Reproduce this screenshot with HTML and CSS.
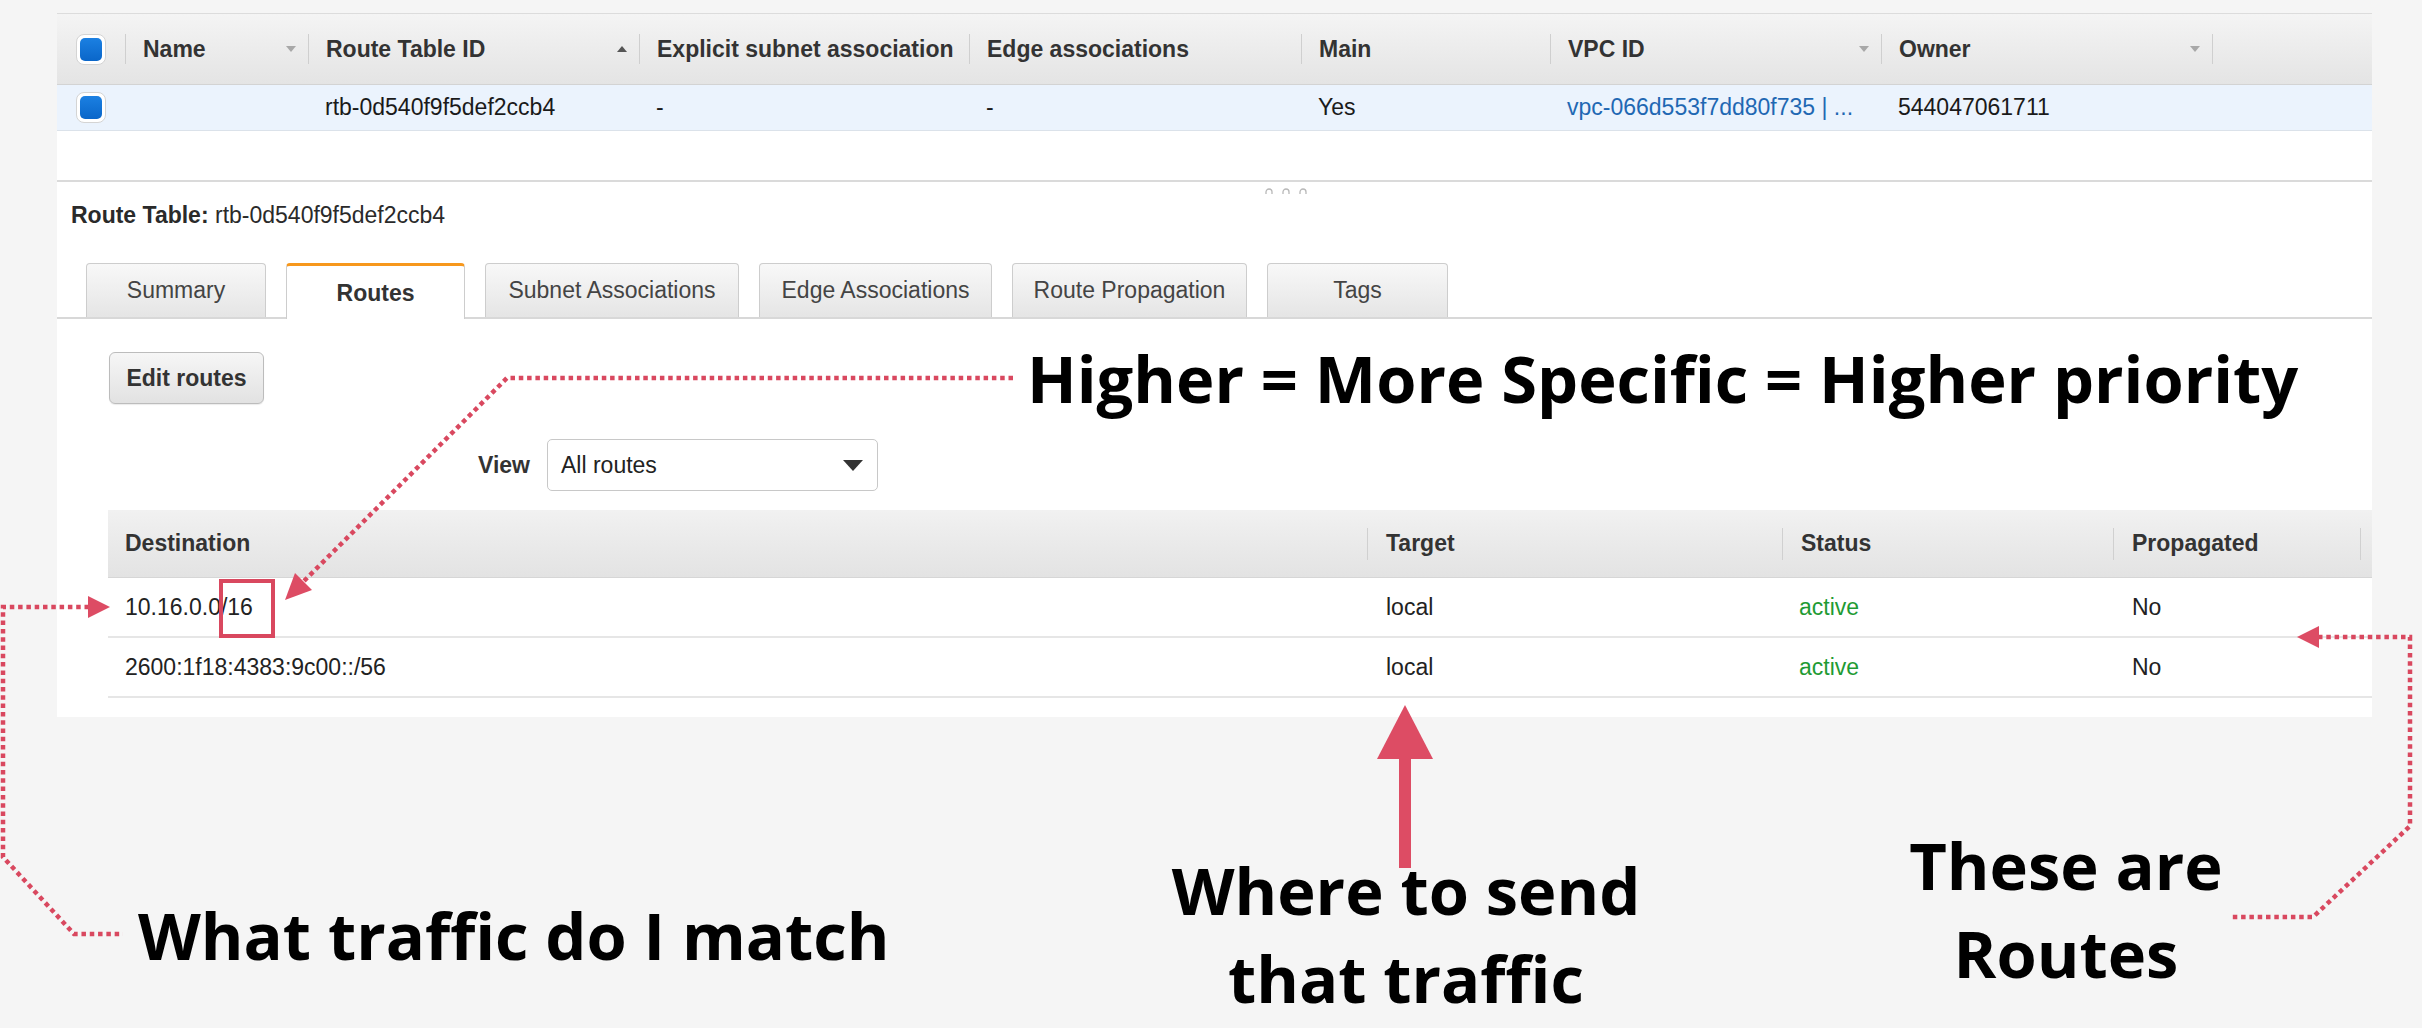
FILE: index.html
```html
<!DOCTYPE html>
<html>
<head>
<meta charset="utf-8">
<link rel="stylesheet" href="styles.css">
</head>
<body>
<div class="panel">
  <div class="rt-head">
    <div class="hc first"><span class="cb"><i></i></span></div>
    <div class="hc"><span>Name</span><b class="sort-down"></b></div>
    <div class="hc"><span>Route Table ID</span><b class="sort-up"></b></div>
    <div class="hc"><span>Explicit subnet association</span></div>
    <div class="hc"><span>Edge associations</span></div>
    <div class="hc"><span>Main</span></div>
    <div class="hc"><span>VPC ID</span><b class="sort-down"></b></div>
    <div class="hc"><span>Owner</span><b class="sort-down"></b></div>
    <div class="hc"></div>
  </div>
  <div class="rt-row">
    <div class="rc first"><span class="cb"><i></i></span></div>
    <div class="rc"></div>
    <div class="rc">rtb-0d540f9f5def2ccb4</div>
    <div class="rc">-</div>
    <div class="rc">-</div>
    <div class="rc">Yes</div>
    <div class="rc link">vpc-066d553f7dd80f735 | ...</div>
    <div class="rc">544047061711</div>
    <div class="rc"></div>
  </div>
  <div class="rt-spacer"></div>
  <div class="divider"></div>
  <div class="handle">
    <svg width="44" height="8" viewBox="0 0 44 8"><path d="M2 7 V5 A3 3 0 0 1 8 5 V7 M19 7 V5 A3 3 0 0 1 25 5 V7 M36 7 V5 A3 3 0 0 1 42 5 V7" fill="none" stroke="#b8b8b8" stroke-width="1.3"/></svg>
  </div>
  <div class="title"><b>Route Table:</b> rtb-0d540f9f5def2ccb4</div>
  <div class="tabs">
    <div class="tab w180">Summary</div>
    <div class="tab active w179">Routes</div>
    <div class="tab w254">Subnet Associations</div>
    <div class="tab w233">Edge Associations</div>
    <div class="tab w235">Route Propagation</div>
    <div class="tab w181">Tags</div>
  </div>
  <div class="content">
    <button class="btn">Edit routes</button>
    <div class="view-row">
      <span class="view-label">View</span>
      <div class="select"><span>All routes</span><b class="caret"></b></div>
    </div>
    <div class="routes">
      <div class="r-head">
        <div class="rh">Destination</div>
        <div class="rh sep">Target</div>
        <div class="rh sep">Status</div>
        <div class="rh sep">Propagated</div>
        <div class="rh sep"></div>
      </div>
      <div class="r-row">
        <div class="rd">10.16.0.0/16</div>
        <div class="rd">local</div>
        <div class="rd ok">active</div>
        <div class="rd">No</div>
        <div class="rd"></div>
      </div>
      <div class="r-row">
        <div class="rd">2600:1f18:4383:9c00::/56</div>
        <div class="rd">local</div>
        <div class="rd ok">active</div>
        <div class="rd">No</div>
        <div class="rd"></div>
      </div>
    </div>
  </div>
</div>

<div class="annot">
  <svg class="annot-svg" width="2422" height="1028" viewBox="0 0 2422 1028">
    <g fill="none" stroke="#d9485f" stroke-width="4.5" stroke-dasharray="4.5 3.8">
      <path d="M1013 378 H507 L303 582"/>
      <path d="M89 607 H3 V857 L74 934 H123"/>
      <path d="M2318 637 H2410 V826 L2313 917 H2230"/>
    </g>
    <g fill="#dd4c64">
      <polygon points="285,600 312,590 295,573"/>
      <polygon points="110,607 88,596 88,618"/>
      <polygon points="2297,637 2319,626 2319,648"/>
      <rect x="1399" y="755" width="12" height="113"/>
      <polygon points="1405,705 1433,759 1377,759"/>
    </g>
    <rect x="221" y="581" width="52" height="55" fill="none" stroke="#d9485f" stroke-width="4"/>
  </svg>
  <div class="note note-higher">Higher = More Specific = Higher priority</div>
  <div class="note note-what">What traffic do I match</div>
  <div class="note note-where">Where to send<br>that traffic</div>
  <div class="note note-these">These are<br>Routes</div>
</div>
</body>
</html>
```
FILE: styles.css
```css
html, body {
  margin: 0;
  padding: 0;
}
body {
  width: 2422px;
  height: 1028px;
  overflow: hidden;
  position: relative;
  background: #f5f5f5;
  font-family: "Liberation Sans", Arial, sans-serif;
  font-size: 23px;
  color: #222;
}
.panel {
  margin: 13px 0 0 57px;
  width: 2315px;
  height: 704px;
  background: #fff;
}

/* top grid */
.rt-head, .rt-row {
  display: grid;
  grid-template-columns: 68px 183px 331px 330px 332px 249px 331px 331px 1fr;
}
.rt-head {
  box-sizing: border-box;
  height: 72px;
  border-top: 1px solid #dcdcdc;
  border-bottom: 1px solid #d3d3d3;
  background: linear-gradient(#f4f4f4, #e4e4e4);
}
.hc {
  display: flex;
  align-items: center;
  justify-content: space-between;
  padding: 0 12px 0 18px;
  font-weight: bold;
  color: #333;
  white-space: nowrap;
  background: linear-gradient(#cfcfcf, #cfcfcf) no-repeat left center / 1px 30px;
}
.hc.first, .rc.first {
  background: none;
  padding-left: 19px;
}
.sort-down {
  flex: none;
  width: 0;
  height: 0;
  border-left: 5px solid transparent;
  border-right: 5px solid transparent;
  border-top: 6px solid #a8a8a8;
}
.sort-up {
  flex: none;
  width: 0;
  height: 0;
  border-left: 5px solid transparent;
  border-right: 5px solid transparent;
  border-bottom: 6px solid #555;
}
.cb {
  display: block;
  box-sizing: border-box;
  width: 30px;
  height: 31px;
  padding: 3px;
  border: 1px solid #d4d4d4;
  border-radius: 8px;
  background: #fff;
}
.cb i {
  display: block;
  width: 100%;
  height: 100%;
  border-radius: 5px;
  background: linear-gradient(#1b80e2, #0a66c9);
}
.rt-row {
  box-sizing: border-box;
  height: 46px;
  background: #ebf3fd;
  border-bottom: 1px solid #dbe2ea;
}
.rc {
  display: flex;
  align-items: center;
  padding-left: 17px;
  white-space: nowrap;
  color: #1a1a1a;
}
.rc.link {
  color: #1f68b3;
}
.rt-spacer {
  height: 49px;
}
.divider {
  height: 2px;
  background: #dadada;
}
.handle {
  height: 18px;
  padding-left: 1207px;
  box-sizing: border-box;
  padding-top: 5px;
}
.handle svg {
  display: block;
}
.title {
  height: 30px;
  line-height: 30px;
  padding-left: 14px;
  color: #2a2a2a;
}

/* tabs */
.tabs {
  display: flex;
  align-items: flex-start;
  gap: 20px;
  margin-top: 33px;
  padding-left: 29px;
  height: 54px;
  border-bottom: 2px solid #d8d8d8;
}
.tab {
  box-sizing: border-box;
  height: 54px;
  display: flex;
  align-items: center;
  justify-content: center;
  border: 1px solid #cdcdcd;
  border-bottom: none;
  border-radius: 4px 4px 0 0;
  background: linear-gradient(#f8f8f8, #e5e5e5);
  color: #444;
}
.tab.active {
  height: 56px;
  border-top: 3px solid #f7981d;
  background: #fff;
  font-weight: bold;
  color: #333;
  padding-top: 2px;
}
.w180 { width: 180px; }
.w179 { width: 179px; }
.w254 { width: 254px; }
.w233 { width: 233px; }
.w235 { width: 235px; }
.w181 { width: 181px; }

/* content */
.content {
  padding-left: 51px;
}
.btn {
  display: block;
  margin: 33px 0 0 1px;
  width: 155px;
  height: 52px;
  border: 1px solid #bcbcbc;
  border-radius: 6px;
  background: linear-gradient(#f6f6f6, #e2e2e2);
  box-shadow: 0 1px 1px rgba(0,0,0,0.08);
  font-family: "Liberation Sans", Arial, sans-serif;
  font-size: 23px;
  font-weight: bold;
  color: #333;
  padding: 0;
}
.view-row {
  display: flex;
  align-items: center;
  margin-top: 35px;
  height: 52px;
}
.view-label {
  margin-left: 370px;
  width: 69px;
  font-weight: bold;
  color: #333;
}
.select {
  box-sizing: border-box;
  width: 331px;
  height: 52px;
  border: 1px solid #c8c8c8;
  border-radius: 5px;
  display: flex;
  align-items: center;
  justify-content: space-between;
  padding: 0 14px 0 13px;
  color: #222;
}
.caret {
  width: 0;
  height: 0;
  border-left: 10px solid transparent;
  border-right: 10px solid transparent;
  border-top: 11px solid #333;
}
.routes {
  margin-top: 19px;
}
.r-head, .r-row {
  display: grid;
  grid-template-columns: 1259px 415px 331px 247px 1fr;
}
.r-head {
  box-sizing: border-box;
  height: 68px;
  background: linear-gradient(#f1f1f1, #e3e3e3);
  border-bottom: 1px solid #d6d6d6;
}
.rh {
  display: flex;
  align-items: center;
  padding-left: 17px;
  font-weight: bold;
  color: #333;
}
.rh.sep {
  padding-left: 19px;
  background: linear-gradient(#d0d0d0, #d0d0d0) no-repeat left center / 1px 32px;
}
.r-row {
  box-sizing: border-box;
  height: 60px;
  border-bottom: 2px solid #e6e6e6;
}
.r-row:first-of-type {
  height: 59px;
}
.rd {
  display: flex;
  align-items: center;
  padding-left: 17px;
  color: #222;
}
.rd + .rd {
  padding-left: 19px;
}
.rd.ok {
  color: #1f9b34;
  padding-left: 17px;
}

/* annotations overlay */
.annot {
  position: absolute;
  left: 0;
  top: 0;
  width: 2422px;
  height: 1028px;
  pointer-events: none;
}
.annot-svg {
  position: absolute;
  left: 0;
  top: 0;
}
.note {
  position: absolute;
  font-family: "Open Sans", sans-serif;
  font-weight: 700;
  font-size: 65px;
  line-height: 88px;
  color: #000;
  white-space: nowrap;
}
.note-higher {
  left: 1027px;
  top: 334px;
}
.note-what {
  left: 138px;
  top: 891px;
}
.note-where {
  left: 1106px;
  top: 846px;
  width: 600px;
  text-align: center;
}
.note-these {
  left: 1766px;
  top: 821px;
  width: 600px;
  text-align: center;
}
```
